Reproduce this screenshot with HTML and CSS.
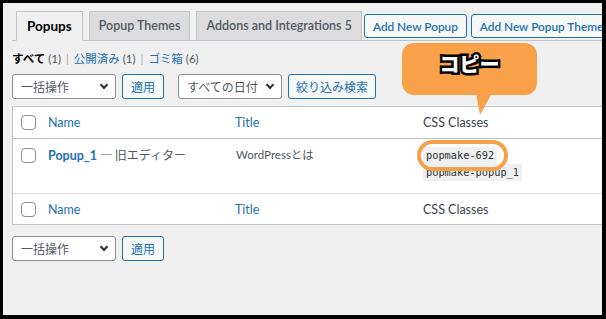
FILE: index.html
```html
<!DOCTYPE html>
<html lang="ja">
<head>
<meta charset="utf-8">
<link rel="stylesheet" href="styles.css">
</head>
<body>
<div class="frame">
  <div class="wrap">
    <div class="tabbar">
      <div class="tabs">
        <span class="tab active">Popups</span>
        <span class="tab">Popup Themes</span>
        <span class="tab">Addons and Integrations 5</span>
      </div>
      <span class="btn head">Add New Popup</span>
      <span class="btn head">Add New Popup Theme</span>
    </div>

    <div class="status">
      <b class="cur">すべて</b> <span class="count">(1)</span>
      <span class="sep">|</span>
      <span class="link">公開済み</span> <span class="count">(1)</span>
      <span class="sep">|</span>
      <span class="link">ゴミ箱</span> <span class="count">(6)</span>
    </div>

    <div class="controls">
      <span class="select">一括操作<i class="chev"></i></span>
      <span class="btn">適用</span>
      <span class="select date">すべての日付<i class="chev"></i></span>
      <span class="btn filter">絞り込み検索</span>
    </div>

    <div class="table">
      <div class="row head-row">
        <span class="cb"></span>
        <span class="col name link">Name</span>
        <span class="col title link">Title</span>
        <span class="col css">CSS Classes</span>
      </div>
      <div class="row body-row">
        <span class="cb"></span>
        <span class="col name"><b class="link">Popup_1</b> <span class="state">— 旧エディター</span></span>
        <span class="col title">WordPressとは</span>
        <span class="col css codes">
          <code>popmake-692</code>
          <code>popmake-popup_1</code>
        </span>
      </div>
      <div class="row foot-row">
        <span class="cb"></span>
        <span class="col name link">Name</span>
        <span class="col title link">Title</span>
        <span class="col css">CSS Classes</span>
      </div>
    </div>

    <div class="controls bottom">
      <span class="select">一括操作<i class="chev"></i></span>
      <span class="btn">適用</span>
    </div>
  </div>

  <div class="bubble">コピー</div>
  <div class="ring"></div>
</div>
</body>
</html>
```

FILE: styles.css
```css
* { box-sizing: border-box; }
html, body { margin: 0; padding: 0; }
body {
  background: #000;
  width: 606px;
  height: 319px;
  overflow: hidden;
  font-family: "Lato", "Noto Sans CJK JP", sans-serif;
  font-size: 12px;
  color: #3c434a;
}
.frame {
  position: relative;
  margin: 3px 4px 0 3px;
  height: 312px;
  background: #f0f0f1;
  overflow: hidden;
}
.wrap {
  padding: 9px 0 0 9px;
}
.tabbar {
  display: flex;
  align-items: center;
  border-bottom: 1px solid #c3c4c7;
  height: 29px;
  white-space: nowrap;
}
.tabs {
  display: flex;
  align-self: flex-end;
  gap: 6px;
  margin-left: 4px;
  margin-bottom: -1px;
}
.tab {
  display: block;
  height: 30px;
  line-height: 28px;
  padding: 0 9px;
  border: 1px solid #c3c4c7;
  background: #dcdcde;
  font-size: 12.5px;
  font-weight: 600;
  color: #50575e;
}
.tab.active {
  background: #f0f0f1;
  border-bottom-color: #f0f0f1;
  color: #000;
  font-size: 13.5px;
  font-weight: 700;
  padding: 0 10px;
}
.btn {
  display: inline-flex;
  align-items: center;
  height: 25px;
  padding: 0 8px;
  border: 1px solid #2271b1;
  border-radius: 3px;
  background: #f6f7f7;
  color: #2271b1;
  font-size: 12px;
  white-space: nowrap;
}
.btn.filter { padding: 0 7px; }
.btn.head {
  height: 24px;
  font-weight: 600;
  margin-left: 2px;
  padding: 0 8px;
  font-size: 11.8px;
}
.btn.head + .btn.head { margin-left: 4px; }
.status {
  margin-top: 9px;
  height: 18px;
  line-height: 18px;
  font-size: 11.5px;
  color: #50575e;
}
.status .cur { color: #000; font-weight: 700; }
.status .link { color: #2271b1; }
.status .sep { color: #a7aaad; margin: 0 2px; }
.status .count { font-size: 11.5px; }
.controls {
  display: flex;
  align-items: center;
  gap: 6px;
  margin-top: 6px;
  height: 25px;
}
.select {
  display: inline-flex;
  align-items: center;
  justify-content: space-between;
  width: 104px;
  height: 25px;
  padding: 0 8px 0 8px;
  border: 1px solid #8c8f94;
  border-radius: 3px;
  background: #fff;
  color: #50575e;
  font-size: 12px;
}
.select.date { margin-left: 8px; }
.chev {
  display: block;
  width: 6px;
  height: 6px;
  border-right: 2px solid #2c3338;
  border-bottom: 2px solid #2c3338;
  transform: translateY(-2px) rotate(45deg);
}
.table {
  margin-top: 7px;
  background: #fff;
  border: 1px solid #c3c4c7;
  width: 610px;
}
.row {
  display: flex;
  align-items: center;
}
.head-row {
  height: 32px;
  border-bottom: 1px solid #c3c4c7;
}
.body-row {
  height: 54px;
  align-items: flex-start;
  padding-top: 8px;
  background: #fff;
}
.foot-row {
  height: 31px;
  border-top: 1px solid #dcdcde;
}
.cb {
  flex: none;
  width: 15px;
  height: 15px;
  margin: 0 12px 0 8px;
  border: 1px solid #8c8f94;
  border-radius: 4px;
  background: #fff;
}
.body-row .cb { margin-top: 1px; }
.col { display: block; font-size: 12.5px; }
.name { width: 187px; }
.title { width: 188px; }
.link { color: #2271b1; }
.body-row .name b { font-weight: 700; font-size: 12.5px; }
.body-row .name .state {
  color: #50575e;
  font-size: 12px;
  font-family: "Noto Sans CJK JP", sans-serif;
}
.body-row .title { color: #50575e; font-size: 11.5px; padding-left: 1px; }
.body-row .col { line-height: 16px; }
.codes {
  display: flex;
  flex-direction: column;
  align-items: flex-start;
  margin-top: -8px;
  padding-top: 8px;
}
code {
  display: block;
  font-family: "DejaVu Sans Mono", monospace;
  font-size: 10.3px;
  line-height: 17px;
  padding: 0 3px;
  background: #f0f0f1;
  color: #2c3338;
}
.controls.bottom { margin-top: 11px; }

.bubble {
  position: absolute;
  left: 399px;
  top: 40px;
  width: 135px;
  height: 52px;
  border-radius: 12px;
  background: #f8a148;
  display: flex;
  justify-content: center;
  padding-top: 9px;
  font-family: "Noto Sans CJK JP", sans-serif;
  font-weight: 900;
  font-size: 20px;
  line-height: 24px;
  color: #fff;
  -webkit-text-stroke: 5px #000;
  paint-order: stroke fill;
}
.bubble::after {
  content: "";
  position: absolute;
  left: 74px;
  top: 50px;
  width: 0;
  height: 0;
  border-left: 4px solid transparent;
  border-right: 12px solid transparent;
  border-top: 22px solid #f8a148;
}
.ring {
  position: absolute;
  left: 414px;
  top: 137px;
  width: 91px;
  height: 31px;
  border: 4px solid #f5a04a;
  border-radius: 16px;
}
```
